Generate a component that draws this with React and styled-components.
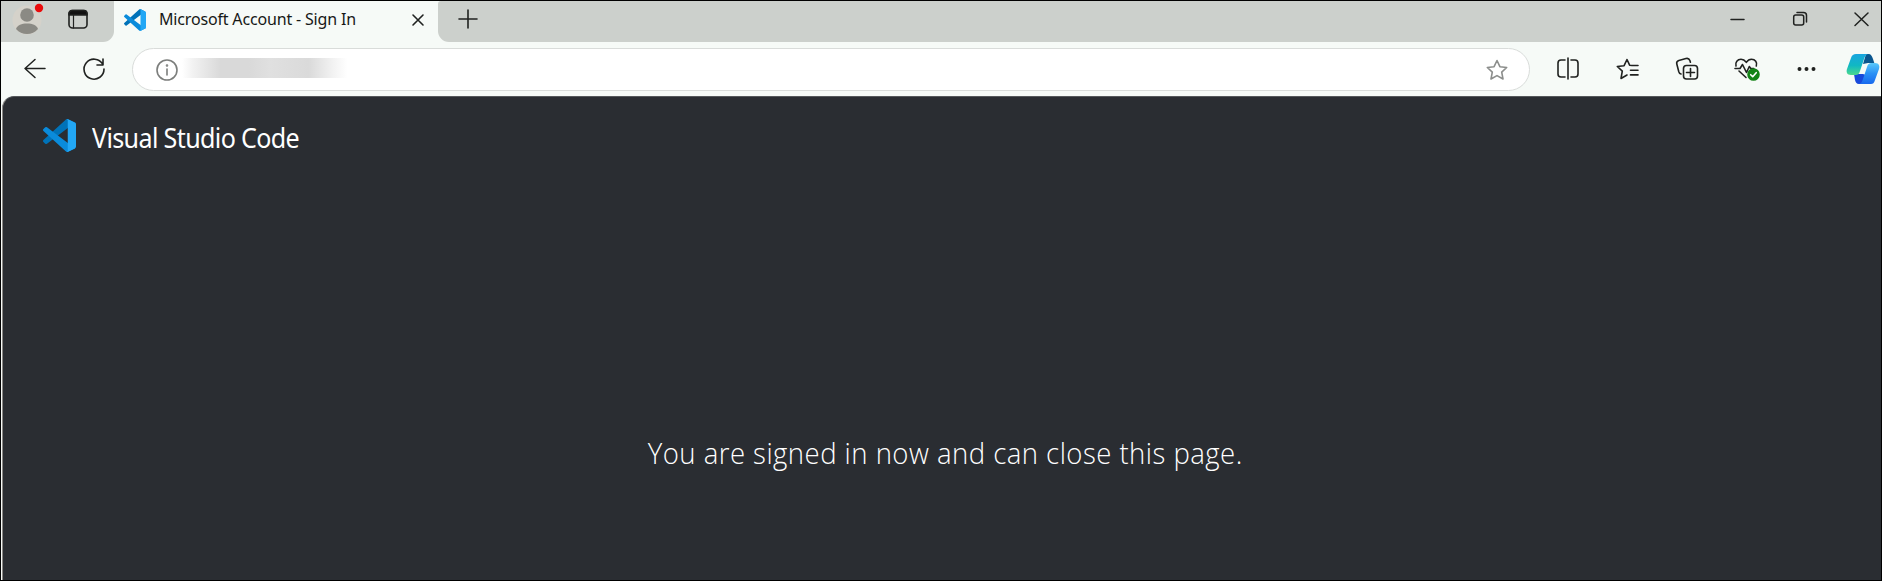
import React from 'react';
import styled, { createGlobalStyle } from 'styled-components';

const Global = createGlobalStyle`
  *{box-sizing:border-box}
  html,body{margin:0;padding:0;overflow:hidden}
  body{font-family:"Noto Sans","Open Sans",sans-serif;color:#1b1c1b}
  svg{display:block;flex:none;overflow:visible}
`;
const Window = styled.div`
  width:1882px;height:581px;border:1px solid #000;background:#f6faf7;
  display:flex;flex-direction:column;overflow:hidden;
`;
const TabStrip = styled.div`height:41px;display:flex;flex:none;background:#f6faf7;`;
const StripStart = styled.div`
  width:113px;background:#ccd0cc;border-bottom-right-radius:11px;
  display:flex;align-items:flex-start;padding:3px 0 0 11px;
`;
const ProfileButton = styled.div`width:32px;margin-right:24px;`;
const WorkspaceButton = styled.div`padding-top:5px;`;
const Tab = styled.div`
  width:324px;display:flex;align-items:center;padding:0 14px 4px 10px;
`;
const TabTitle = styled.span`
  font-size:16px;line-height:24px;letter-spacing:-.17px;white-space:nowrap;
  margin:-2px 0 0 13px;flex:1;color:#161816;
`;
const StripEnd = styled.div`
  flex:1;background:#ccd0cc;border-bottom-left-radius:11px;border-top-left-radius:3px;
  display:flex;justify-content:space-between;align-items:flex-start;padding:8px 12px 0 20px;
`;
const WindowControls = styled.div`display:flex;gap:48px;padding-top:2px;`;
const Toolbar = styled.div`
  height:54px;flex:none;display:flex;align-items:center;padding:0 1px 0 22px;
`;
const NavButtons = styled.div`display:flex;gap:35px;width:109px;`;
const AddressBar = styled.div`
  width:1399px;height:43px;border:1px solid #d9dcda;border-radius:22px;background:#fff;
  display:flex;align-items:center;padding:0 21px 0 23px;margin-top:1px;
`;
const MaskedAddress = styled.div`
  width:176px;height:20px;margin:0 auto 4px 4px;
  background:linear-gradient(90deg,#fff 0,#f2f2f2 6%,#d9d9d9 22%,#d9d9d9 38%,#e0e0e0 50%,#dadada 72%,#f1f1f1 85%,#fff 94%);
`;
const Tools = styled.div`display:flex;flex:1;gap:37px;align-items:center;padding-left:27px;`;
const CopilotButton = styled.div`margin-left:-8px;`;
const Page = styled.main`
  flex:1;margin-left:1px;background:#2a2d32;border-top:1px solid #55585b;border-left:1px solid #8b8986;
  border-top-left-radius:12px;display:flex;flex-direction:column;color:#fff;
`;
const Brand = styled.header`display:flex;align-items:center;height:76px;padding-left:40px;`;
const BrandName = styled.div`
  font-size:27.5px;line-height:36px;letter-spacing:-.7px;margin:5px 0 0 16px;white-space:nowrap;
  transform:scaleX(.912);transform-origin:left;
`;
const Message = styled.p`
  margin:260px 0 0;padding-left:7px;text-align:center;white-space:nowrap;
  font-family:"Open Sans","Noto Sans",sans-serif;font-weight:300;font-size:30px;line-height:40px;
  letter-spacing:.5px;transform:scaleX(.918);
`;

const Icon = ({ w = 24, h = w, sw = 1.6, color = '#202220', children }) => (
  <svg width={w} height={h} viewBox={`0 0 ${w} ${h}`} fill="none" stroke={color}
    strokeWidth={sw} strokeLinecap="round" strokeLinejoin="round">{children}</svg>
);

const VSLogo = ({ size }) => (
  <svg width={size} height={size} viewBox="0 0 100 100">
    <path fill="#0072B8" d="M96.5 10.8 75.9.9a6.2 6.2 0 0 0-7.1 1.2L1.3 63.6a4.2 4.2 0 0 0 0 6.2l5.5 5a4.2 4.2 0 0 0 5.3.2l81.2-61.6c2.7-2.1 6.7-.1 6.7 3.3v-.3c0-2.4-1.4-4.6-3.5-5.6Z" />
    <path fill="#0A8BDB" d="M96.5 89.2 75.9 99.1a6.2 6.2 0 0 1-7.1-1.2L1.3 36.4a4.2 4.2 0 0 1 0-6.2l5.5-5a4.2 4.2 0 0 1 5.3-.2l81.2 61.6c2.7 2.1 6.7.1 6.7-3.3v.3c0 2.4-1.4 4.6-3.5 5.6Z" />
    <path fill="#22A7F5" d="M75.9 99.1a6.2 6.2 0 0 1-7.1-1.2c2.3 2.3 6.2.7 6.2-2.6V4.7c0-3.3-3.9-4.9-6.2-2.6A6.2 6.2 0 0 1 75.9.9l20.6 9.9c2.1 1 3.5 3.2 3.5 5.6v67.2c0 2.4-1.4 4.6-3.5 5.6Z" />
  </svg>
);
const Avatar = () => (
  <svg width="32" height="32" viewBox="0 0 32 32">
    <circle cx="15" cy="16" r="14.5" fill="#d5d2ca" />
    <circle cx="15" cy="11" r="6.8" fill="#8b8a84" />
    <path d="M4 25c1.500-4 5.500-5.500 11-5.500S24.500 21 26 25c-3 3.600-6.500 5-11 5S7 28.600 4 25Z" fill="#8b8a84" />
    <circle cx="27" cy="4" r="4.200" fill="#e90b0b" />
  </svg>
);
const Copilot = () => (
  <svg width="34" height="32" viewBox="0 0 34 32">
    <defs>
      <linearGradient id="cl" x1="0" y1="0" x2="0" y2="1"><stop stopColor="#19a5df" /><stop offset=".55" stopColor="#10b8c3" /><stop offset="1" stopColor="#4bd98c" /></linearGradient>
      <linearGradient id="cr" x1="0" y1="0" x2="0" y2="1"><stop stopColor="#58c8fa" /><stop offset=".5" stopColor="#2a91f5" /><stop offset="1" stopColor="#1769ee" /></linearGradient>
    </defs>
    <path d="M20 1h2.500C25 1 26 3 27 6l1.300 4H22l-5 1Z" fill="#0a568e" />
    <path d="M8 21h9l3 1-4 9h-3c-2.600 0-3.500-2-4-4Z" fill="#1849db" />
    <path d="M10 1h13c-3 0-4 2-5 5l-4 12c-1 3-2 4-4.500 4H5c-4 0-5-3-4-6L5 5c1-3 2.500-4 5-4Z" fill="url(#cl)" />
    <path d="M25 31H12c3 0 4-2 5-5l4-12c1-3 2-4 4.500-4H29c4 0 5 3 4 6l-4 11c-1 3-2 4-4 4Z" fill="url(#cr)" />
  </svg>
);
const starPath = 'M11 1.500 13.900 7.700 20.700 8.500 15.700 13.200 17 20 11 16.600 5 20 6.300 13.200 1.300 8.500 8.100 7.700Z';

export default function App() {
  return (
    <>
      <Global />
      <Window>
        <TabStrip>
          <StripStart>
            <ProfileButton><Avatar /></ProfileButton>
            <WorkspaceButton>
              <Icon w={20}>
                <rect x="1" y="1.500" width="18" height="17.500" rx="3.500" />
                <path d="M1 6V4.500A3 3 0 0 1 4 1.500h12a3 3 0 0 1 3 3V6Z" fill="#111" />
                <path d="M5.500 6v13" strokeWidth="1.200" />
              </Icon>
            </WorkspaceButton>
          </StripStart>
          <Tab>
            <VSLogo size={22} />
            <TabTitle>Microsoft Account - Sign In</TabTitle>
            <Icon w={12}><path d="M1 1l10 10M11 1 1 11" /></Icon>
          </Tab>
          <StripEnd>
            <Icon w={20}><path d="M10 1v18M1 10h18" /></Icon>
            <WindowControls>
              <Icon w={14} h={16} sw={1.5}><path d="M0 8.500h13" /></Icon>
              <Icon w={14} h={16} sw={1.5}><rect x=".7" y="4" width="10" height="10" rx="2" /><path d="M4 1.500h6.500a3 3 0 0 1 3 3V11" /></Icon>
              <Icon w={14} h={16} sw={1.5}><path d="m0 2 13 12.500m0-12.500L0 14.500" /></Icon>
            </WindowControls>
          </StripEnd>
        </TabStrip>
        <Toolbar>
          <NavButtons>
            <Icon w={24}><path d="M22 11.500H2m10-9-10 9 10 9" strokeWidth="1.500" /></Icon>
            <Icon w={24}><path d="M20.700 7.200A10 10 0 1 0 22 12M21 2v6h-6" /></Icon>
          </NavButtons>
          <AddressBar>
            <Icon w={22} color="#7c7e7c"><circle cx="11" cy="11" r="10" /><path d="M11 10v6" /><circle cx="11" cy="6.500" r=".5" /></Icon>
            <MaskedAddress />
            <Icon w={22} color="#8c8e8c"><path d={starPath} /></Icon>
          </AddressBar>
          <Tools>
            <Icon w={22}><path d="M8 2H4a3 3 0 0 0-3 3v11a3 3 0 0 0 3 3h4M14 2h4a3 3 0 0 1 3 3v11a3 3 0 0 1-3 3h-4M11 0v21" /></Icon>
            <Icon w={23} h={22}><path d="M16 7.500 13.600 7.200 11 1.500 8.100 7.700 1.300 8.500 6.300 13.200 5 20.500 11 17M14.500 7.500H22M14.500 12.200H22M14.500 16.900H22" /></Icon>
            <Icon w={22}><rect x="7.500" y="7.500" width="14" height="13.500" rx="3" /><path d="M14.500 10.500v8M10.500 14.500h8M5 16c-1.300-.3-1.800-1-2.200-2.300L.8 6C.3 4 1 3 2.800 2.400L10 .5c2-.5 3.200.2 3.900 2l.5 1.800" /></Icon>
            <Icon w={25} h={22}><path d="M1 8C0 4 2.500 1.300 6 1.300c2.300 0 4 1.300 5.300 3C12.500 2.600 14.300 1.300 16.500 1.300 20.200 1.300 22.500 4.500 21.300 8M0 10.500h5l2.500-4 4 8 2.800-6 1.500 2h3M4 13l7 6.500" /><circle cx="18.500" cy="16.500" r="5.500" fill="#138316" stroke="#138316" /><path stroke="#fff" d="m15.700 16.700 2 2 3.500-4" /></Icon>
            <Icon w={20} h={22}><circle cx="2.500" cy="11" r="1.200" fill="#202220" /><circle cx="9.500" cy="11" r="1.200" fill="#202220" /><circle cx="16.500" cy="11" r="1.200" fill="#202220" /></Icon>
            <CopilotButton><Copilot /></CopilotButton>
          </Tools>
        </Toolbar>
        <Page>
          <Brand><VSLogo size={33} /><BrandName>Visual Studio Code</BrandName></Brand>
          <Message>You are signed in now and can close this page.</Message>
        </Page>
      </Window>
    </>
  );
}
